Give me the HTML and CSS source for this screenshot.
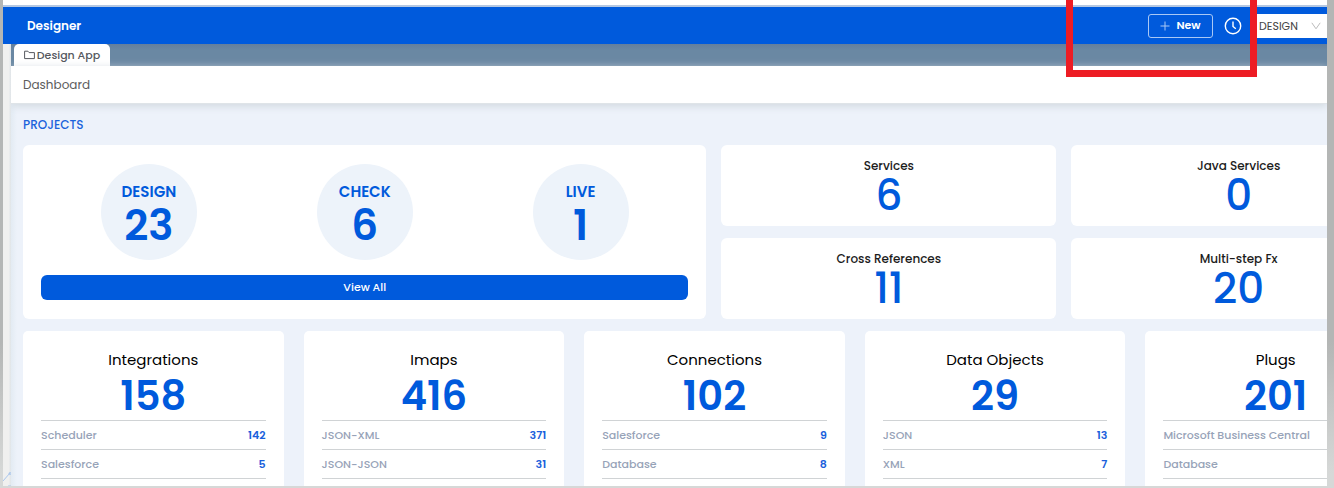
FILE: index.html
```html
<!DOCTYPE html>
<html lang="en">
<head>
<meta charset="utf-8">
<title>Designer</title>
<link rel="stylesheet" href="styles.css">
</head>
<body>
<div class="window">
  <header class="topbar">
    <h1 class="brand">Designer</h1>
    <div class="actions">
      <button class="new-btn" type="button">
        <svg class="plus" viewBox="0 0 10 10" aria-hidden="true"><path d="M5 0.5v9M0.5 5h9"/></svg>
        New
      </button>
      <button class="clock-btn" type="button" aria-label="History">
        <svg viewBox="0 0 18 18" aria-hidden="true"><circle cx="9" cy="9" r="7.7"/><path d="M9 4.5v5l2.8 2.3"/></svg>
      </button>
      <div class="env">
        <select class="env-select" aria-label="Environment"><option>DESIGN</option><option>CHECK</option><option>LIVE</option></select>
        <svg class="chevron" viewBox="0 0 10 8" aria-hidden="true"><path d="M0.8 0.8L5 6.8L9.2 0.8"/></svg>
      </div>
    </div>
  </header>
  <div class="body">
    <aside class="rail">
      <svg class="rail-art" viewBox="0 0 8 14" aria-hidden="true"><path d="M0 9L7 1M5 14h3"/><circle cx="7" cy="1.5" r="1"/></svg>
    </aside>
    <main class="main">
      <nav class="tabs">
        <a class="tab" href="#app">
          <svg viewBox="0 0 11 10" aria-hidden="true"><path d="M0.6 1.2h3.3l1.2 1.4h5.3v6H0.6z"/></svg>
          Design App
        </a>
      </nav>
      <div class="crumb">Dashboard</div>
      <div class="board">
        <h2 class="section">PROJECTS</h2>
        <div class="top-grid">
          <section class="card projects">
            <div class="circles">
              <div class="circle"><span class="circle-label">DESIGN</span><span class="circle-num">23</span></div>
              <div class="circle"><span class="circle-label">CHECK</span><span class="circle-num">6</span></div>
              <div class="circle"><span class="circle-label">LIVE</span><span class="circle-num">1</span></div>
            </div>
            <button class="view-all" type="button">View All</button>
          </section>
          <section class="card mini"><span class="mini-label">Services</span><span class="mini-num">6</span></section>
          <section class="card mini"><span class="mini-label">Java Services</span><span class="mini-num">0</span></section>
          <section class="card mini"><span class="mini-label">Cross References</span><span class="mini-num">11</span></section>
          <section class="card mini"><span class="mini-label">Multi-step Fx</span><span class="mini-num">20</span></section>
        </div>
        <div class="stats">
          <section class="card stat"><h3>Integrations</h3><p class="total">158</p>
            <table><tr><th scope="row">Scheduler</th><td>142</td></tr><tr><th scope="row">Salesforce</th><td>5</td></tr></table></section>
          <section class="card stat"><h3>Imaps</h3><p class="total">416</p>
            <table><tr><th scope="row">JSON-XML</th><td>371</td></tr><tr><th scope="row">JSON-JSON</th><td>31</td></tr></table></section>
          <section class="card stat"><h3>Connections</h3><p class="total">102</p>
            <table><tr><th scope="row">Salesforce</th><td>9</td></tr><tr><th scope="row">Database</th><td>8</td></tr></table></section>
          <section class="card stat"><h3>Data Objects</h3><p class="total">29</p>
            <table><tr><th scope="row">JSON</th><td>13</td></tr><tr><th scope="row">XML</th><td>7</td></tr></table></section>
          <section class="card stat"><h3>Plugs</h3><p class="total">201</p>
            <table><tr><th scope="row">Microsoft Business Central</th><td></td></tr><tr><th scope="row">Database</th><td></td></tr></table></section>
        </div>
      </div>
    </main>
  </div>
</div>
<div class="highlight"></div>
</body>
</html>
```
FILE: styles.css
```css
* { box-sizing: border-box; }
body {
  margin: 0;
  height: 100vh;
  padding: 0 7px 2px 3px;
  overflow: hidden;
  background: linear-gradient(#b4b6b5 70%, #d6d8d7 97%);
  font-family: Poppins, Inter, sans-serif;
  font-size: 12px;
}
h1, h2, h3, p { margin: 0; font-weight: 500; }
button, select { font: inherit; }
svg { fill: none; stroke: currentColor; display: block; flex: none; }

.window {
  height: 100%;
  display: flex;
  flex-direction: column;
  overflow: hidden;
  background: #fff;
  padding-top: 5px;
}
.topbar {
  height: 39px;
  flex: none;
  display: flex;
  align-items: center;
  justify-content: space-between;
  padding-left: 24px;
  background: #005adc;
  border-top: 2px solid #b5c8e2;
  color: #fff;
}
.brand { font-size: 12px; font-weight: 600; line-height: 20px; }
.actions { display: flex; align-items: center; }
.new-btn {
  width: 65px;
  height: 24px;
  display: flex;
  align-items: center;
  justify-content: center;
  gap: 6px;
  padding: 0;
  margin-right: 11px;
  border: 1px solid #a9c8f5;
  border-radius: 3px;
  background: none;
  color: #fff;
  font-size: 11px;
  font-weight: 600;
}
.plus { width: 10px; height: 10px; color: #a9c8f5; }
.clock-btn { padding: 0; margin-right: 10px; border: 0; background: none; color: #fff; }
.clock-btn svg { width: 18px; height: 18px; stroke-width: 1.4; }
.env { position: relative; width: 75px; height: 24px; }
.env-select {
  appearance: none;
  width: 100%;
  height: 100%;
  padding: 0 0 0 7px;
  border: 0;
  border-radius: 3px 0 0 3px;
  background: #fff;
  color: #444;
  font-size: 11px;
  font-weight: 400;
}
.chevron {
  position: absolute;
  right: 6px;
  top: 8px;
  width: 10px;
  height: 8px;
  color: #bbb;
  pointer-events: none;
}
.body { flex: 1; min-height: 0; display: flex; }
.rail {
  width: 8px;
  flex: none;
  display: flex;
  align-items: flex-end;
  background: linear-gradient(90deg, #f0f0ef 70%, #dfe4e8);
}
.rail-art { width: 8px; height: 14px; color: #a9c6ec; }
.main { flex: 1; min-width: 0; overflow: hidden; background: linear-gradient(90deg, #e3ebf3, #edf2fa 6px); }
.tabs {
  height: 22px;
  padding-left: 3px;
  background: linear-gradient(#647f9c, #6a88a3 6px);
}
.tab {
  width: 96px;
  height: 22px;
  display: flex;
  align-items: center;
  justify-content: center;
  gap: 2px;
  border-radius: 5px 5px 0 0;
  background: #fff;
  color: #55585e;
  font-size: 11px;
  font-weight: 500;
  text-decoration: none;
}
.tab svg { width: 11px; height: 10px; }
.crumb {
  height: 38px;
  padding-left: 12px;
  line-height: 37px;
  background: #fff;
  border-bottom: 1px solid #dfe4e8;
  box-shadow: 0 2px 8px #d0d8de;
  color: #5c5c5c;
  font-size: 12px;
}
.board { margin-right: -91px; padding: 11px 12px; }
.section { color: #1a63dc; font-size: 12px; line-height: 20px; font-weight: 500; }
.card { background: #fff; border-radius: 6px; }
.top-grid {
  display: grid;
  grid-template-columns: 684fr 335fr 335fr;
  grid-template-rows: 81px 81px;
  gap: 12px 15px;
  margin: 10px 0 12px;
}
.projects {
  grid-row: span 2;
  display: flex;
  flex-direction: column;
  justify-content: space-between;
  padding: 19px 18px;
}
.circles { display: grid; grid-template-columns: repeat(3, 1fr); justify-items: center; }
.circle {
  width: 96px;
  height: 96px;
  padding-top: 18px;
  border-radius: 50%;
  background: #edf3fa;
  color: #005adc;
  display: flex;
  flex-direction: column;
  align-items: center;
}
.circle-label { font-size: 15px; font-weight: 600; line-height: 20px; }
.circle-num { font-size: 42px; font-weight: 600; line-height: 48px; }
.view-all {
  height: 25px;
  border: 0;
  border-radius: 6px;
  background: #005adc;
  color: #fff;
  font-size: 11px;
  font-weight: 500;
}
.mini { display: flex; flex-direction: column; align-items: center; padding-top: 11px; }
.mini-label { color: #1c1c1c; font-size: 12px; line-height: 20px; font-weight: 500; }
.mini-num { color: #005adc; font-size: 42px; line-height: 40px; font-weight: 500; }
.stats { display: grid; grid-template-columns: repeat(5, 1fr); gap: 20px; }
.stat { padding: 17px 18px; height: 200px; border-radius: 5px; }
.stat h3 { color: #000; font-size: 15px; line-height: 24px; font-weight: 400; text-align: center; }
.total { color: #005adc; font-size: 40px; line-height: 48px; font-weight: 600; text-align: center; }
table { width: 100%; border-collapse: collapse; }
tr { height: 29px; border-top: 1px solid #d0d3d5; border-bottom: 1px solid #d0d3d5; }
th, td { padding: 0 0 1px; font-size: 11px; line-height: 20px; text-align: left; }
th { color: #97a3b8; font-weight: 500; white-space: nowrap; }
td { color: #1a5fdc; font-weight: 600; text-align: right; }
.highlight {
  position: absolute;
  top: 0;
  right: 77px;
  width: 191px;
  height: 77px;
  border: 7px solid #ed1c24;
  border-top: 0;
  pointer-events: none;
}
```
